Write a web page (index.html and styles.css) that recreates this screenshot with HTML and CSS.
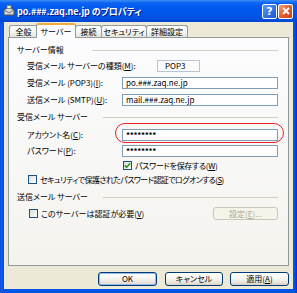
FILE: index.html
```html
<!DOCTYPE html>
<html lang="ja">
<head>
  <meta charset="UTF-8" />
  <title>po.###.zaq.ne.jp のプロパティ</title>
  <link rel="stylesheet" href="styles.css">
</head>
<body>
  <div class="window">
    <div class="titlebar">
      <svg class="app-icon" width="12" height="12" viewBox="0 0 12 12">
        <path d="M1 5 L6 2 L11 5 L11 10 L1 10 Z" fill="#d8d8d0" stroke="#555" stroke-width="1"/>
        <path d="M2 5.5 L6 8 L10 5.5" fill="none" stroke="#777" stroke-width="1"/>
        <rect x="4" y="0.5" width="4" height="3" fill="#f5f0c0" stroke="#777" stroke-width="0.8"/>
      </svg>
      <span class="title">po.###.zaq.ne.jp のプロパティ</span>
      <span class="tb-btn help">?</span>
      <span class="tb-btn close">
        <svg width="8" height="8" viewBox="0 0 8 8"><path d="M1 1 L7 7 M7 1 L1 7" stroke="#fff" stroke-width="1.8"/></svg>
      </span>
    </div>

    <div class="client">
      <div class="tabs">
        <span class="tab t1">全般</span>
        <span class="tab t2 active">サーバー</span>
        <span class="tab t3">接続</span>
        <span class="tab t4">セキュリティ</span>
        <span class="tab t5">詳細設定</span>
      </div>

      <div class="panel">
        <div class="group-title"><span class="gt-text first">サーバー情報</span><span class="rule"></span></div>
        <div class="row">
          <span class="label">受信メール サーバーの種類(<u>M</u>):</span>
          <span class="readonly">POP3</span>
        </div>
        <div class="row">
          <span class="label">受信メール (POP3)(<u>I</u>):</span>
          <span class="field">po.###.zaq.ne.jp</span>
        </div>
        <div class="row">
          <span class="label">送信メール (SMTP)(<u>U</u>):</span>
          <span class="field">mail.###.zaq.ne.jp</span>
        </div>

        <div class="group-title sec2"><span class="gt-text">受信メール サーバー</span><span class="rule"></span></div>
        <div class="row r-account">
          <span class="label">アカウント名(<u>C</u>):</span>
          <span class="field stars">********</span>
        </div>
        <div class="row r-pass">
          <span class="label">パスワード(<u>P</u>):</span>
          <span class="field stars">********</span>
        </div>
        <div class="row r-save">
          <span class="check checked">
            <svg width="7" height="7" viewBox="0 0 7 7"><path d="M0.8 3.4 L2.6 5.3 L6.2 1.2" fill="none" stroke="#21a121" stroke-width="1.6"/></svg>
          </span>
          <span class="tight">パスワードを保存する(<u>W</u>)</span>
        </div>
        <div class="row r-spa">
          <span class="check"></span>
          <span class="tighter">セキュリティで保護されたパスワード認証でログオンする(<u>S</u>)</span>
        </div>

        <div class="group-title sec3"><span class="gt-text">送信メール サーバー</span><span class="rule"></span></div>
        <div class="row r-auth">
          <span class="check"></span>
          <span>このサーバーは認証が必要(<u>V</u>)</span>
          <span class="btn disabled">設定(<u>E</u>)...</span>
        </div>

        <div class="callout"></div>
      </div>

      <div class="buttons">
        <span class="btn default">OK</span>
        <span class="btn">キャンセル</span>
        <span class="btn">適用(<u>A</u>)</span>
      </div>
    </div>
  </div>
</body>
</html>
```

FILE: styles.css
```css
* {
  box-sizing: border-box;
}

body {
  margin: 0;
  width: 297px;
  height: 293px;
  overflow: hidden;
  font-family: "Noto Sans CJK JP", "Noto Sans", sans-serif;
  font-size: 8px;
  font-feature-settings: "palt" 1;
  line-height: 1;
  color: #000;
  background: #0054e3;
}

u {
  text-decoration: underline;
  text-underline-offset: 1px;
}

.window {
  width: 297px;
  height: 293px;
  display: flex;
  flex-direction: column;
  background: linear-gradient(to right, #0831d9 0, #166aee 1px, #0055e5 2px, #0055e5 295px, #0831d9 296px);
}

/* title bar */

.titlebar {
  height: 22px;
  display: flex;
  align-items: center;
  padding: 0 4px 0 3px;
  background: linear-gradient(to bottom, #3c8df5 0, #0a63f2 3px, #0058ee 9px, #0054e5 17px, #0046d0 22px);
}

.app-icon {
  flex: none;
  margin-right: 2px;
}

.title {
  flex: 1;
  color: #fff;
  font-weight: 700;
  font-size: 9px;
  letter-spacing: -0.1px;
  text-shadow: 1px 1px 0 #0a1883;
  white-space: nowrap;
}

.tb-btn {
  width: 15px;
  height: 15px;
  border: 1px solid #fff;
  border-radius: 2px;
  display: flex;
  align-items: center;
  justify-content: center;
  color: #fff;
  font-family: "DejaVu Sans", sans-serif;
  font-weight: 700;
  font-size: 11px;
}

.help {
  background: linear-gradient(135deg, #5a9cf8, #2d6ee6 60%, #1d55d0);
  margin-right: 1px;
}

.close {
  background: linear-gradient(135deg, #f0a07c, #e05a2c 55%, #c9401a);
}

/* client area */

.client {
  flex: 1;
  margin: 0 4px 4px;
  background: #ece9d8;
  padding: 1px 4px 3px;
  display: flex;
  flex-direction: column;
}

.tabs {
  height: 14px;
  display: flex;
  align-items: flex-end;
  padding-left: 1px;
  position: relative;
  z-index: 1;
}

.tab {
  height: 12px;
  display: flex;
  align-items: center;
  justify-content: center;
  border: 1px solid #919b9c;
  border-bottom: none;
  border-radius: 3px 3px 0 0;
  background: linear-gradient(to bottom, #fff, #f3f3ef 60%, #e3e2da);
  margin-right: -1px;
  white-space: nowrap;
}

.t1 { width: 29px; margin-right: 0; }
.t2 { width: 40px; }
.t3 { width: 27px; }
.t4 { width: 46px; }
.t5 { width: 42px; }

.tab.active {
  height: 15px;
  margin: 0 -1px -1px -2px;
  background: #fcfcfe;
  border-top: 2px solid #f2a93b;
  position: relative;
}

.panel {
  height: 229px;
  position: relative;
  border: 1px solid #919b9c;
  background: linear-gradient(to bottom, #fcfcfe, #f4f3ee);
  padding: 7px 10px 0 8px;
}

.group-title {
  height: 10px;
  display: flex;
  align-items: center;
}

.gt-text {
  width: 86px;
  white-space: nowrap;
}

.gt-text.first {
  width: 75px;
}

.rule {
  flex: 1;
  border-top: 1px solid #d0d0bf;
}

.sec2 { margin-top: 6px; }
.sec3 { margin-top: 6px; }

.row {
  height: 13px;
  display: flex;
  align-items: center;
  margin: 4px 0 0 10px;
  white-space: nowrap;
}

.label {
  width: 95px;
  flex: none;
}

.readonly {
  width: 43px;
  height: 12px;
  display: flex;
  align-items: center;
  padding-left: 7px;
  border: 1px solid #b9c4d2;
  margin-left: 35px;
}

.field {
  width: 157px;
  height: 12px;
  display: flex;
  align-items: center;
  padding-left: 3px;
  border: 1px solid #7f9db9;
  background: #fff;
}

.stars {
  font-weight: 700;
  letter-spacing: -0.3px;
}

.tight {
  letter-spacing: -0.3px;
}

.tighter {
  letter-spacing: -0.6px;
}

.r-account { margin-top: 6px; }
.r-pass { margin-top: 3px; }
.r-save { margin-top: 2px; padding-left: 96px; }
.r-spa { margin-top: 1px; padding-left: 1px; }
.r-auth { margin-top: 5px; padding-left: 2px; }

.check {
  width: 9px;
  height: 9px;
  flex: none;
  border: 1px solid #1c5180;
  background: linear-gradient(135deg, #dcdcd7, #fff);
  display: flex;
  align-items: center;
  justify-content: center;
  margin-right: 3px;
}

.btn {
  display: flex;
  align-items: center;
  justify-content: center;
  height: 14px;
  border: 1px solid #003c74;
  border-radius: 3px;
  background: linear-gradient(to bottom, #fff, #f4f4f0 50%, #e3e0d6 85%, #d6d0c5);
}

.btn.disabled {
  width: 65px;
  height: 13px;
  margin-left: auto;
  border-color: #c9c7ba;
  background: #f5f4ea;
  color: #aca899;
}

.callout {
  position: absolute;
  left: 106px;
  top: 85px;
  width: 169px;
  height: 20px;
  border: 1.5px solid #e8202a;
  border-radius: 10px;
}

.buttons {
  margin-top: 6px;
  display: flex;
  justify-content: flex-end;
  gap: 7px;
}

.buttons .btn {
  width: 59px;
}

.buttons .btn:nth-child(2) {
  width: 58px;
}

.btn.default {
  box-shadow: inset 0 0 0 1px #98b8ea;
  margin-right: 1px;
}
```
